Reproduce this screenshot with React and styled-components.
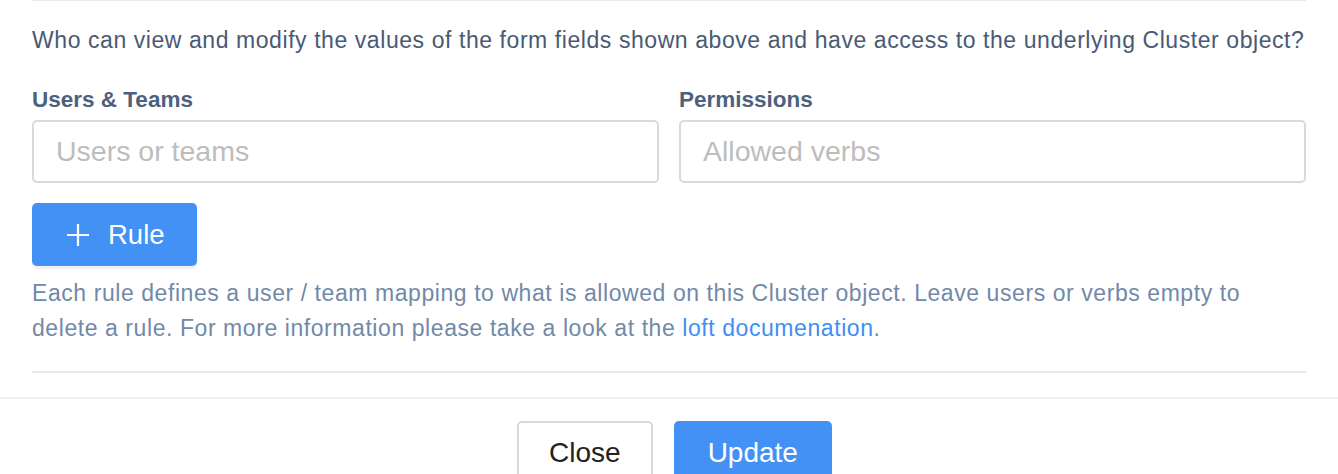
import React from 'react'
import styled, { createGlobalStyle } from 'styled-components'

const GlobalStyle = createGlobalStyle`
  html, body {
    margin: 0;
    padding: 0;
    background: #ffffff;
    font-family: "Liberation Sans", Arial, sans-serif;
  }
`

const Page = styled.div`
  width: 1338px;
  height: 474px;
  overflow: hidden;
`

const Section = styled.div`
  padding: 0 32px 24px 32px;
`

const TopRule = styled.div`
  height: 1px;
  background: #e4e9f2;
`

const Intro = styled.p`
  margin: 23px 0 0 0;
  font-size: 23px;
  letter-spacing: 0.57px;
  line-height: 33px;
  white-space: nowrap;
  color: #485a74;
`

const FieldRow = styled.div`
  display: grid;
  grid-template-columns: 1fr 1fr;
  column-gap: 20px;
  margin-top: 26px;
`

const Field = styled.div`
  display: flex;
  flex-direction: column;
`

const Label = styled.label`
  font-size: 22.5px;
  font-weight: 700;
  line-height: 34px;
  color: #4d617c;
  margin-bottom: 3px;
`

const Input = styled.input`
  box-sizing: border-box;
  height: 63px;
  width: 100%;
  border: 2px solid #dadada;
  border-radius: 5px;
  padding: 0 22px;
  font-family: "Liberation Sans", Arial, sans-serif;
  font-size: 28.5px;
  color: #333;
  outline: none;
  &::placeholder {
    color: #bdbdbd;
  }
`

const AddButton = styled.button`
  display: flex;
  align-items: center;
  gap: 19px;
  margin-top: 20px;
  height: 63px;
  padding: 0 32px 0 35px;
  border: none;
  border-radius: 5px;
  background: #4391f5;
  color: #ffffff;
  font-family: "Liberation Sans", Arial, sans-serif;
  font-size: 27.5px;
  box-shadow: 0 3px 0 #f1f1f1;
  cursor: pointer;
`

const Help = styled.p`
  margin: 10px 0 0 0;
  font-size: 23px;
  letter-spacing: 0.57px;
  line-height: 35px;
  color: #7289a7;
`

const DocLink = styled.a`
  color: #3f8ef3;
  text-decoration: none;
`

const Divider = styled.div`
  height: 2px;
  background: #e4e9f3;
  margin-top: 25px;
`

const Footer = styled.div`
  display: flex;
  justify-content: center;
  gap: 21px;
  padding: 22px 0 0 11px;
  border-top: 2px solid #f0f2f7;
`

const FooterButton = styled.button`
  box-sizing: border-box;
  height: 63px;
  padding: 0 ${(p) => (p.$primary ? '32px' : '30px')};
  border-radius: 5px;
  font-family: "Liberation Sans", Arial, sans-serif;
  font-size: 28px;
  cursor: pointer;
  border: 2px solid ${(p) => (p.$primary ? '#4391f5' : '#d9d9d9')};
  background: ${(p) => (p.$primary ? '#4391f5' : '#ffffff')};
  color: ${(p) => (p.$primary ? '#ffffff' : '#222222')};
`

const PlusIcon = () => (
  <svg width="22" height="22" viewBox="0 0 22 22">
    <path d="M11 0v22M0 11h22" stroke="#fff" strokeWidth="2.2" fill="none" />
  </svg>
)

export default function App() {
  return (
    <Page>
      <GlobalStyle />
      <Section>
        <TopRule />
        <Intro>
          Who can view and modify the values of the form fields shown above and have access to the underlying Cluster object?
        </Intro>
        <FieldRow>
          <Field>
            <Label>Users &amp; Teams</Label>
            <Input placeholder="Users or teams" />
          </Field>
          <Field>
            <Label>Permissions</Label>
            <Input placeholder="Allowed verbs" />
          </Field>
        </FieldRow>
        <AddButton>
          <PlusIcon />
          Rule
        </AddButton>
        <Help>
          Each rule defines a user / team mapping to what is allowed on this Cluster object. Leave users or verbs empty to
          delete a rule. For more information please take a look at the <DocLink href="#">loft documenation</DocLink>.
        </Help>
        <Divider />
      </Section>
      <Footer>
        <FooterButton>Close</FooterButton>
        <FooterButton $primary>Update</FooterButton>
      </Footer>
    </Page>
  )
}
